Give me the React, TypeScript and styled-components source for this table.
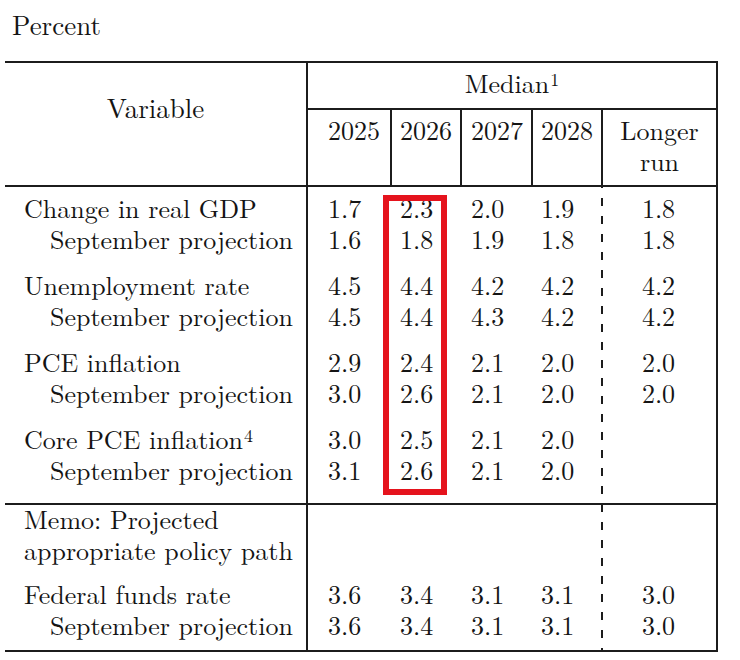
import React from "react";
import styled, { createGlobalStyle } from "styled-components";

const INK = "#1c1c1c";
const COLS = "303px 84px 70px 71px 68px 115px";
const INDENTS = [20, 8, 9, 8];
const SERIF = `"Latin Modern Roman", "Liberation Serif", "Times New Roman", serif`;

const GlobalStyle = createGlobalStyle`
  *, *::before, *::after { box-sizing: border-box; }
  html, body { margin: 0; padding: 0; background: #ffffff; }
  body {
    font-family: ${SERIF};
    color: #141414;
  }
`;

const Page = styled.div`
  width: 740px;
  padding: 9px 0 0 5px;
  font-family: ${SERIF};
`;

const Title = styled.div`
  font-size: 27px;
  line-height: 31px;
  margin: 0 0 21px 7px;
`;

const Table = styled.div`
  position: relative;
  width: 713px;
  border-top: 2px solid ${INK};
  border-right: 2px solid ${INK};
  border-bottom: 2px solid ${INK};
  font-size: 26px;
  line-height: 31px;
`;

const Header = styled.div`
  display: grid;
  grid-template-columns: ${COLS};
  grid-template-rows: 47px 75px;
  border-bottom: 2px solid ${INK};
`;

const VariableHead = styled.div`
  grid-row: 1 / span 2;
  border-right: 2px solid ${INK};
  text-align: center;
  padding-top: 29px;
  font-size: 27px;
`;

const MedianHead = styled.div`
  grid-column: 2 / span 5;
  border-bottom: 2px solid ${INK};
  text-align: center;
  padding-top: 4px;
`;

const YearHead = styled.div<{ $indent: number; $rule: boolean }>`
  padding-top: 4px;
  padding-left: ${(p) => p.$indent}px;
  border-right: ${(p) => (p.$rule ? `2px solid ${INK}` : "none")};
`;

const LongerHead = styled.div`
  padding-top: 4px;
  border-left: 2px solid ${INK};
  text-align: center;
`;

const Section = styled.div<{ $rule: boolean }>`
  border-bottom: ${(p) => (p.$rule ? `2px solid ${INK}` : "none")};
`;

const Row = styled.div<{ $top: number; $bottom: number }>`
  display: grid;
  grid-template-columns: ${COLS};
  & > * {
    line-height: 27px;
    padding-top: ${(p) => p.$top}px;
    padding-bottom: ${(p) => p.$bottom + 4}px;
  }
`;

const Label = styled.div<{ $sub: boolean }>`
  border-right: 2px solid ${INK};
  padding-left: ${(p) => (p.$sub ? 45 : 19)}px;
  white-space: nowrap;
`;

const Value = styled.div<{ $indent: number }>`
  padding-left: ${(p) => p.$indent}px;
`;

const LongRun = styled.div`
  text-align: center;
  background-image: linear-gradient(to bottom, ${INK} 0 8px, transparent 8px 18px);
  background-size: 2px 18px;
  background-repeat: repeat-y;
  background-position: 601px 0;
  background-attachment: fixed;
`;

const Sup = styled.sup`
  font-size: 18px;
  line-height: 0;
  vertical-align: 7px;
  margin-left: 1px;
`;

const Highlight = styled.div`
  position: absolute;
  left: 378px;
  top: 132px;
  width: 64px;
  height: 300px;
  border: 6px solid #e5131d;
  pointer-events: none;
`;

type Line = {
  label: React.ReactNode;
  sub?: boolean;
  values: string[];
  longer?: string;
  top?: number;
  bottom?: number;
};

const projections: Line[] = [
  { label: "Change in real GDP", values: ["1.7", "2.3", "2.0", "1.9"], longer: "1.8", top: 7 },
  { label: "September projection", sub: true, values: ["1.6", "1.8", "1.9", "1.8"], longer: "1.8" },
  { label: "Unemployment rate", values: ["4.5", "4.4", "4.2", "4.2"], longer: "4.2", top: 15 },
  { label: "September projection", sub: true, values: ["4.5", "4.4", "4.3", "4.2"], longer: "4.2" },
  { label: "PCE inflation", values: ["2.9", "2.4", "2.1", "2.0"], longer: "2.0", top: 15 },
  { label: "September projection", sub: true, values: ["3.0", "2.6", "2.1", "2.0"], longer: "2.0" },
  {
    label: (
      <>
        Core PCE inflation<Sup>4</Sup>
      </>
    ),
    values: ["3.0", "2.5", "2.1", "2.0"],
    top: 15,
  },
  { label: "September projection", sub: true, values: ["3.1", "2.6", "2.1", "2.0"], bottom: 16 },
];

const memo: Line[] = [
  { label: "Memo: Projected", values: [] },
  { label: "appropriate policy path", values: [] },
  { label: "Federal funds rate", values: ["3.6", "3.4", "3.1", "3.1"], longer: "3.0", top: 13 },
  { label: "September projection", sub: true, values: ["3.6", "3.4", "3.1", "3.1"], longer: "3.0", bottom: 8 },
];

const DataRow = ({ line }: { line: Line }) => (
  <Row $top={line.top ?? 0} $bottom={line.bottom ?? 0}>
    <Label $sub={!!line.sub}>{line.label}</Label>
    {INDENTS.map((indent, i) => (
      <Value key={i} $indent={indent}>
        {line.values[i] ?? ""}
      </Value>
    ))}
    <LongRun>{line.longer ?? ""}</LongRun>
  </Row>
);

const years = ["2025", "2026", "2027", "2028"];

export default function App() {
  return (
    <Page>
      <GlobalStyle />
      <Title>Percent</Title>
      <Table>
        <Header>
          <VariableHead>Variable</VariableHead>
          <MedianHead>
            Median<Sup>1</Sup>
          </MedianHead>
          {years.map((y, i) => (
            <YearHead key={y} $indent={INDENTS[i]} $rule={i < 3}>
              {y}
            </YearHead>
          ))}
          <LongerHead>
            Longer
            <br />
            run
          </LongerHead>
        </Header>
        <Section $rule>
          {projections.map((line, i) => (
            <DataRow key={i} line={line} />
          ))}
        </Section>
        <Section $rule={false}>
          {memo.map((line, i) => (
            <DataRow key={i} line={line} />
          ))}
        </Section>
        <Highlight />
      </Table>
    </Page>
  );
}
